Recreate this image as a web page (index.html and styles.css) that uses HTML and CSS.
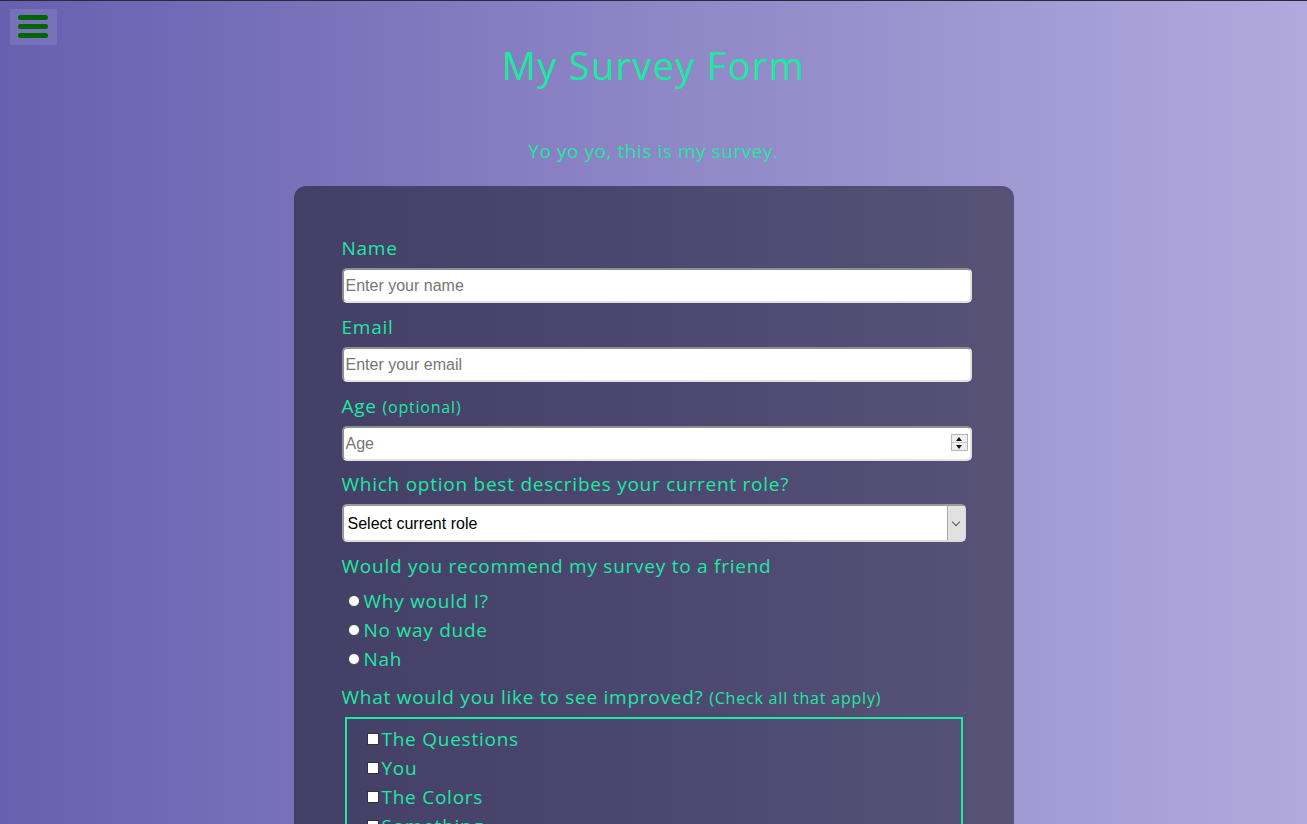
FILE: index.html
```html
<!DOCTYPE html>
<html lang="en">
<head>
<meta charset="utf-8">
<title>My Survey Form</title>
<link rel="stylesheet" href="styles.css">
</head>
<body>
<button class="menu-btn" type="button" aria-label="Menu">
  <span class="bar"></span><span class="bar"></span><span class="bar"></span>
</button>
<header class="header">
  <h1 class="title" id="title">My Survey Form</h1>
  <p class="description" id="description">Yo yo yo, this is my survey.</p>
</header>
<form class="card" id="survey-form">
  <div class="group">
    <label class="label" for="name">Name</label>
    <input class="field" id="name" type="text" placeholder="Enter your name">
  </div>
  <div class="group">
    <label class="label" for="email">Email</label>
    <input class="field" id="email" type="email" placeholder="Enter your email">
  </div>
  <div class="group group-tight">
    <label class="label" for="number">Age <span class="small">(optional)</span></label>
    <div class="num-wrap">
      <input class="field" id="number" type="number" placeholder="Age">
      <span class="spinner"><span class="spin up"></span><span class="spin down"></span></span>
    </div>
  </div>
  <div class="group">
    <label class="label" for="dropdown">Which option best describes your current role?</label>
    <div class="select-wrap">
      <select class="select" id="dropdown">
        <option>Select current role</option>
        <option>Student</option>
        <option>Full Time Job</option>
        <option>Prefer not to say</option>
      </select>
      <span class="select-arrow"></span>
    </div>
  </div>
  <div class="group">
    <p class="label">Would you recommend my survey to a friend</p>
    <ul class="radio-list">
      <li class="option"><input class="radio" type="radio" name="rec" id="r1"><label for="r1">Why would I?</label></li>
      <li class="option"><input class="radio" type="radio" name="rec" id="r2"><label for="r2">No way dude</label></li>
      <li class="option"><input class="radio" type="radio" name="rec" id="r3"><label for="r3">Nah</label></li>
    </ul>
  </div>
  <div class="group">
    <p class="label">What would you like to see improved? <span class="small">(Check all that apply)</span></p>
    <ul class="check-box">
      <li class="option"><input class="check" type="checkbox" id="c1"><label for="c1">The Questions</label></li>
      <li class="option"><input class="check" type="checkbox" id="c2"><label for="c2">You</label></li>
      <li class="option"><input class="check" type="checkbox" id="c3"><label for="c3">The Colors</label></li>
      <li class="option"><input class="check" type="checkbox" id="c4"><label for="c4">Something</label></li>
    </ul>
  </div>
  <div class="group">
    <label class="label" for="comments">Any comments or suggestions?</label>
    <textarea class="field area" id="comments" placeholder="Enter your comment here..."></textarea>
  </div>
  <button class="submit" id="submit" type="submit">Submit</button>
</form>
</body>
</html>
```
FILE: styles.css
```css
* { box-sizing: border-box; }

html, body { margin: 0; padding: 0; }

body {
  min-height: 824px;
  border-top: 1px solid #2b2b38;
  background: linear-gradient(to right, #6660b0 0%, #8e86c6 50%, #b1a9dd 100%);
  font-family: "Open Sans", "DejaVu Sans", sans-serif;
  color: #1de9a0;
}

.menu-btn {
  position: absolute;
  top: 9px;
  left: 10px;
  width: 47px;
  height: 36px;
  padding: 6px 0 0 8px;
  margin: 0;
  border: none;
  background: rgba(255, 255, 255, 0.1);
  display: flex;
  flex-direction: column;
  gap: 4px;
  cursor: pointer;
}

.bar {
  display: block;
  width: 30px;
  height: 5px;
  border-radius: 3px;
  background: #006400;
}

.header {
  text-align: center;
  padding-top: 41px;
}

.title {
  margin: 0;
  font-size: 38px;
  line-height: 46px;
  font-weight: 400;
  letter-spacing: 1.3px;
}

.description {
  margin: 48px 0 0;
  font-size: 19px;
  line-height: 30px;
  letter-spacing: 0.55px;
}

.card {
  width: 720px;
  margin: 20px auto 40px;
  padding: 49px 48px 48px;
  border-radius: 12px;
  background: linear-gradient(to right, #433f66 0%, #4c4770 50%, #575276 100%);
}

.group {
  margin-bottom: 11px;
}

.group-tight {
  margin-bottom: 10px;
}

.label {
  display: block;
  margin: 0 0 7px;
  height: 26px;
  font-size: 19px;
  line-height: 26px;
  letter-spacing: 0.75px;
  white-space: nowrap;
}

.small {
  font-size: 16px;
  line-height: 1;
  letter-spacing: 0.8px;
}

.field {
  display: block;
  width: 630px;
  height: 35px;
  padding: 0 2px;
  margin: 0;
  border: 2px solid;
  border-color: #8f8f8f #e2e2e2 #e2e2e2 #8f8f8f;
  border-radius: 5px;
  background: #fff;
  font-family: "Liberation Sans", Arial, sans-serif;
  font-size: 16px;
  color: #222;
}

.field::placeholder { color: #767676; }

.num-wrap, .select-wrap {
  position: relative;
  width: 630px;
}

.field[type="number"] {
  -moz-appearance: textfield;
  appearance: textfield;
}
.field[type="number"]::-webkit-inner-spin-button,
.field[type="number"]::-webkit-outer-spin-button {
  -webkit-appearance: none;
  margin: 0;
}

.spinner {
  position: absolute;
  top: 8px;
  right: 4px;
  width: 17px;
  height: 17px;
  display: flex;
  flex-direction: column;
  border: 1px solid #b5b5b5;
  background: #efefef;
}

.spin {
  flex: 1;
  display: flex;
  align-items: center;
  justify-content: center;
}
.spin.up { border-bottom: 1px solid #c8c8c8; }
.spin.up::after {
  content: "";
  border-left: 3px solid transparent;
  border-right: 3px solid transparent;
  border-bottom: 4px solid #111;
}
.spin.down::after {
  content: "";
  border-left: 3px solid transparent;
  border-right: 3px solid transparent;
  border-top: 4px solid #111;
}

.select-wrap { width: 624px; }

.select {
  display: block;
  width: 624px;
  height: 38px;
  padding: 0 24px 0 4px;
  margin: 0;
  -webkit-appearance: none;
  appearance: none;
  border: 2px solid;
  border-color: #9a9a9a #dcdcdc #dcdcdc #9a9a9a;
  border-radius: 5px;
  background: #fff;
  font-family: "Liberation Sans", Arial, sans-serif;
  font-size: 16px;
  color: #000;
}

.select-arrow {
  position: absolute;
  top: 2px;
  right: 2px;
  width: 17px;
  height: 34px;
  background: #e1e1e1;
  border-left: 1px solid #aaa;
  border-radius: 0 3px 3px 0;
  pointer-events: none;
}
.select-arrow::after {
  content: "";
  position: absolute;
  left: 5px;
  top: 13px;
  width: 5px;
  height: 5px;
  border-right: 1px solid #555;
  border-bottom: 1px solid #555;
  transform: rotate(45deg);
}

.radio-list, .check-box {
  list-style: none;
  margin: 0;
  padding: 0;
}

.option {
  display: flex;
  align-items: center;
  height: 29px;
  font-size: 19px;
  letter-spacing: 0.75px;
}

.option label { cursor: pointer; }

.radio {
  -webkit-appearance: none;
  appearance: none;
  width: 12px;
  height: 12px;
  margin: 0 4px 0 6px;
  border: 1px solid #444;
  border-radius: 50%;
  background: #fff;
}

.check-box {
  margin: 0 3px;
  padding: 5px 20px 6px;
  border: 2px solid #1de9a0;
}

.check {
  -webkit-appearance: none;
  appearance: none;
  width: 12px;
  height: 12px;
  margin: 0 3px 0 0;
  border: 1px solid #333;
  background: #fff;
}

.area {
  height: 100px;
  padding: 4px;
  resize: vertical;
}

.submit {
  display: block;
  width: 100%;
  height: 42px;
  margin-top: 20px;
  border: none;
  border-radius: 5px;
  background: #1de9a0;
  color: #433f66;
  font-family: "Open Sans", sans-serif;
  font-size: 18px;
}
```
